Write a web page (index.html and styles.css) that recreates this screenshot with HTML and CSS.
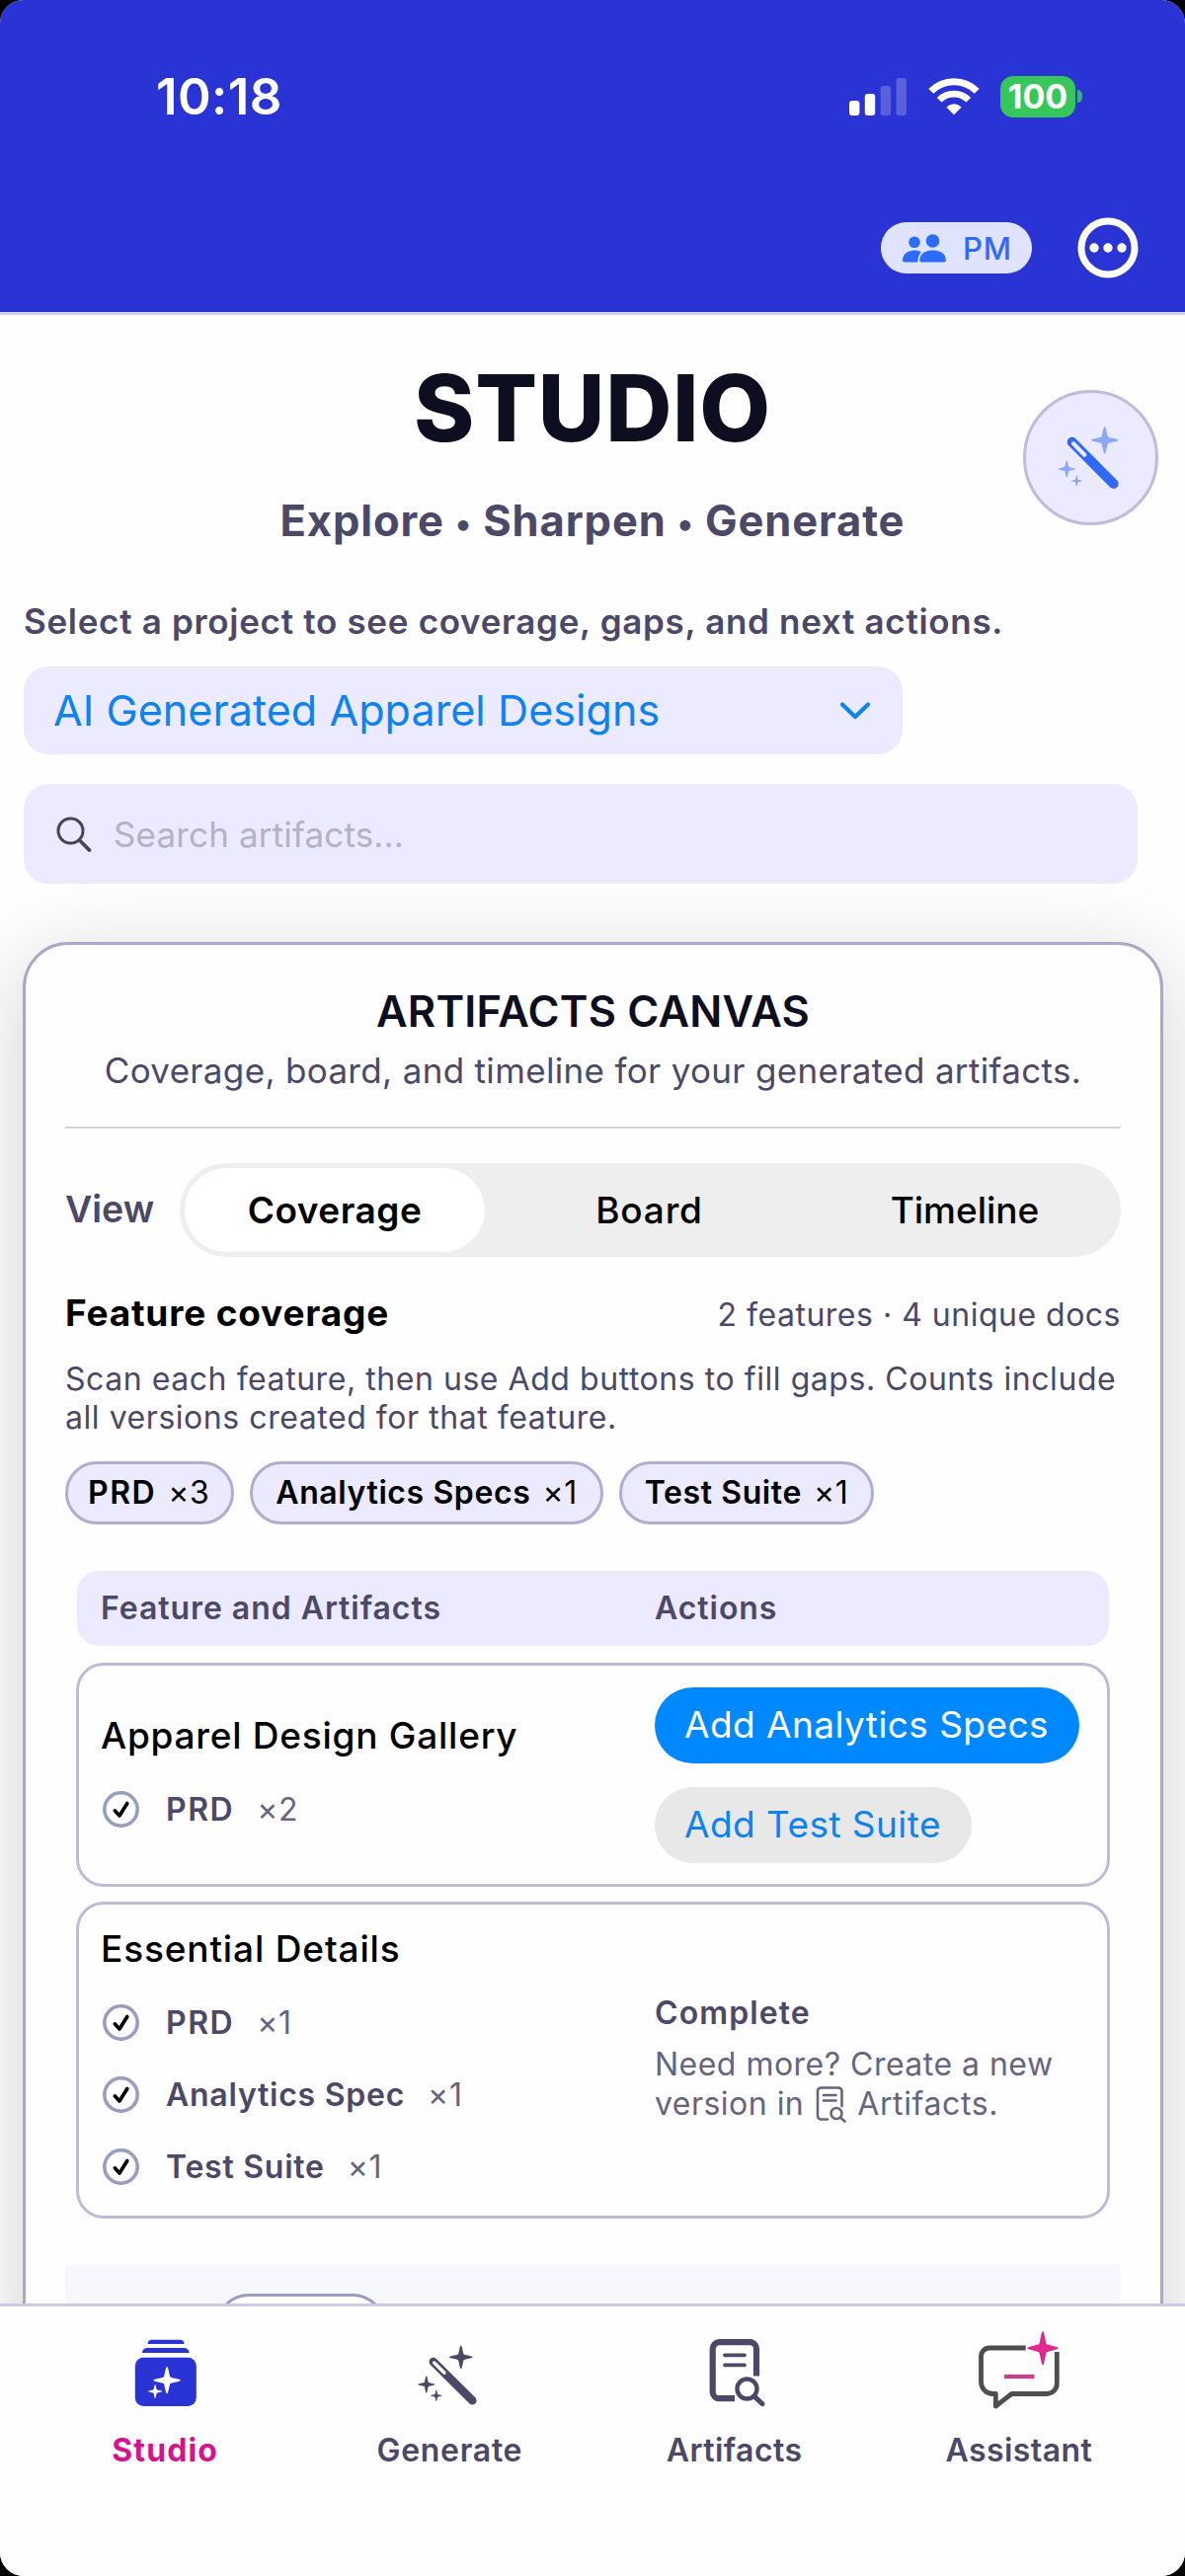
FILE: index.html
```html
<!DOCTYPE html>
<html lang="en">
<head>
<meta charset="utf-8">
<title>Studio</title>
<link rel="stylesheet" href="styles.css">
</head>
<body>
<svg width="0" height="0" class="defs">
  <defs>
    <path id="spark" d="M0-1C.1-1 .14-.5 .24-.24C.5-.14 1-.1 1 0C1 .1 .5.14 .24.24C.14.5 .1 1 0 1C-.1 1-.14.5-.24.24C-.5.14-1 .1-1 0C-1-.1-.5-.14-.24-.24C-.14-.5-.1-1 0-1Z"/>
    <symbol id="docsearch" viewBox="0 0 90 90">
      <g fill="none" stroke="currentColor" stroke-linecap="round">
        <path d="M46 71.2H30.500a6.800 6.800 0 0 1-6.800-6.800V21a6.800 6.800 0 0 1 6.800-6.800H61.200a6.800 6.800 0 0 1 6.800 6.800V48.500" stroke-width="6.200" stroke-linecap="butt"/>
        <path d="M36 27.300H56M36 37.300H56" stroke-width="3.700"/>
        <circle cx="58.500" cy="61.500" r="10" stroke-width="4.400"/>
        <path d="M66.500 69.700L74 76.700" stroke-width="5"/>
      </g>
    </symbol>
  </defs>
</svg>
<div class="app">
  <header class="header">
    <div class="status">
      <span class="time">10:18</span>
      <svg class="signal" width="58" height="38" viewBox="0 0 58 38" fill="#fff">
        <rect x="0" y="23" width="10.4" height="15" rx="3"/>
        <rect x="15.8" y="16" width="10.4" height="22" rx="3"/>
        <g opacity=".22"><rect x="31.7" y="8" width="10.4" height="30" rx="3"/><rect x="47.5" y="0" width="10.4" height="38" rx="3"/></g>
      </svg>
      <svg class="wifi" width="52" height="38" viewBox="0 0 52 38" fill="none" stroke="#fff">
        <path d="M2.8 13.4A32.8 32.8 0 0 1 49.2 13.4" stroke-width="7"/>
        <path d="M11.2 22.3A20.8 20.8 0 0 1 40.8 22.3" stroke-width="6.6"/>
        <path d="M26 37.2L18.3 29.4Q26 23.2 33.7 29.4Z" fill="#fff" stroke="none"/>
      </svg>
      <span class="battery">100</span><span class="nub"></span>
    </div>
    <div class="actions">
      <span class="role">
        <svg width="44" height="29" viewBox="0 0 44 29" fill="#2c6cf8">
          <circle cx="12" cy="8.3" r="5.8"/><path d="M0 26.700C0 20 6 16.500 12 16.500C14.500 16.500 17 17 18.800 18.200C16.300 21 15.300 24.500 15.300 28.500H2Q0 28.500 0 26.700Z"/>
          <circle cx="30.500" cy="7" r="6.800"/><path d="M17.300 26.700C17.300 19.500 24 16.500 30.600 16.500C37.200 16.500 43.900 19.500 43.900 26.700Q43.900 28.500 42 28.500H19.200Q17.300 28.500 17.300 26.700Z"/>
        </svg>
        <b>PM</b>
      </span>
      <svg class="more" width="62" height="62" viewBox="0 0 62 62"><circle cx="31" cy="31" r="27" fill="none" stroke="#fff" stroke-width="7"/><g fill="#fff"><circle cx="17" cy="31" r="4.700"/><circle cx="31" cy="31" r="4.700"/><circle cx="45" cy="31" r="4.700"/></g></svg>
    </div>
  </header>

  <main class="main">
    <section class="hero">
      <div class="hero-text">
        <h1>STUDIO</h1>
        <p>Explore <small>•</small> Sharpen <small>•</small> Generate</p>
      </div>
      <div class="magic">
        <svg width="137" height="137" viewBox="0 0 137 137">
          <path d="M49.700 52.800L91.700 95" stroke="#2e6af6" stroke-width="10" stroke-linecap="round"/>
          <path d="M51 54.300L62.300 65.700" stroke="#eceafe" stroke-width="4.200" stroke-linecap="round"/>
          <g fill="#8ba8f7"><use href="#spark" transform="translate(82.700 50.700) scale(13.700)"/><use href="#spark" transform="translate(44.300 80) scale(8.700)"/><use href="#spark" transform="translate(54.300 92) scale(5.700)"/></g>
        </svg>
      </div>
    </section>
    <p class="hint">Select a project to see coverage, gaps, and next actions.</p>
    <div class="select"><span>AI Generated Apparel Designs</span>
      <svg width="32" height="20" viewBox="0 0 32 20"><path d="M3 3.500L16 16L29 3.500" fill="none" stroke="#0d82f2" stroke-width="4.200" stroke-linecap="round" stroke-linejoin="round"/></svg>
    </div>
    <div class="search">
      <svg width="36" height="36" viewBox="0 0 36 36" fill="none" stroke="#45445f" stroke-linecap="round"><circle cx="14.500" cy="14.500" r="12.500" stroke-width="3"/><path d="M24 24.500L33.500 34" stroke-width="3.800"/></svg>
      <span>Search artifacts...</span>
    </div>

    <section class="canvas">
      <h2>ARTIFACTS CANVAS</h2>
      <p class="sub">Coverage, board, and timeline for your generated artifacts.</p>
      <hr>
      <div class="view">
        <span class="view-label">View</span>
        <div class="segments"><span class="on">Coverage</span><span class="mid">Board</span><span class="end">Timeline</span></div>
      </div>
      <div class="coverage"><h3>Feature coverage</h3><span>2 features · 4 unique docs</span></div>
      <p class="note">Scan each feature, then use Add buttons to fill gaps. Counts include<br>all versions created for that feature.</p>
      <div class="chips">
        <span class="chip"><b class="prd">PRD</b><i>×3</i></span>
        <span class="chip"><b>Analytics Specs</b><i>×1</i></span>
        <span class="chip"><b>Test Suite</b><i>×1</i></span>
      </div>
      <div class="thead"><span>Feature and Artifacts</span><span>Actions</span></div>
      <div class="row row-gallery">
        <div class="left">
          <h4>Apparel Design Gallery</h4>
          <div class="item"><svg class="check" viewBox="0 0 37 37"><circle cx="18.500" cy="18.500" r="16.700"/><path d="M12.300 19.800L17 25L24.800 12.500"/></svg><b class="prd">PRD</b><i>×2</i></div>
        </div>
        <div class="right">
          <span class="btn primary">Add Analytics Specs</span>
          <span class="btn">Add Test Suite</span>
        </div>
      </div>
      <div class="row row-details">
        <div class="left">
          <h4 class="ess">Essential Details</h4>
          <div class="item"><svg class="check" viewBox="0 0 37 37"><circle cx="18.500" cy="18.500" r="16.700"/><path d="M12.300 19.800L17 25L24.800 12.500"/></svg><b class="prd">PRD</b><i>×1</i></div>
          <div class="item"><svg class="check" viewBox="0 0 37 37"><circle cx="18.500" cy="18.500" r="16.700"/><path d="M12.300 19.800L17 25L24.800 12.500"/></svg><b>Analytics Spec</b><i>×1</i></div>
          <div class="item"><svg class="check" viewBox="0 0 37 37"><circle cx="18.500" cy="18.500" r="16.700"/><path d="M12.300 19.800L17 25L24.800 12.500"/></svg><b>Test Suite</b><i>×1</i></div>
        </div>
        <div class="right">
          <h5>Complete</h5>
          <p class="more-text">Need more? Create a new</p>
          <p class="more-text inline"><span>version in</span>
            <svg width="32" height="37" viewBox="0 0 32 37" fill="none" stroke="currentColor" stroke-width="2.600" stroke-linecap="round"><path d="M12 33.500H5.500a3.500 3.500 0 0 1-3.500-3.500V5a3.500 3.500 0 0 1 3.500-3.500H23a3.500 3.500 0 0 1 3.500 3.500V20"/><path d="M8 9H20.500M8 14.500H20.500"/><circle cx="21" cy="27.500" r="5.500"/><path d="M25.200 31.700L29.500 35.500"/></svg>
            <span class="art">Artifacts.</span></p>
        </div>
      </div>
      <div class="band"><div class="stub"></div></div>
    </section>
  </main>

  <nav class="tabs">
    <div class="tab active">
      <svg width="90" height="90" viewBox="0 0 90 90"><g fill="#2a33d3"><path d="M28.500 16Q28.500 11.700 33 11.700H61Q65.500 11.700 65.500 16Z"/><path d="M22.800 25Q23.500 20 28.500 20H65Q70 20 70.800 25Z"/><rect x="15.800" y="29.700" width="62" height="49.300" rx="8.500"/></g><g fill="#fff"><use href="#spark" transform="translate(48.100 52.700) scale(13.700)"/><use href="#spark" transform="translate(36.100 64) scale(7)"/></g></svg>
      <span>Studio</span>
    </div>
    <div class="tab gen">
      <svg width="90" height="90" viewBox="0 0 90 90"><path d="M29.800 34L69.300 73.300" stroke="#4b4868" stroke-width="8.600" stroke-linecap="round"/><path d="M30.700 35L41 45.300" stroke="#fff" stroke-width="3.400" stroke-linecap="round"/><g fill="#4b4868"><use href="#spark" transform="translate(57.800 29.300) scale(11.900)"/><use href="#spark" transform="translate(22.800 57) scale(8.700)"/><use href="#spark" transform="translate(32.800 68.300) scale(5.800)"/></g></svg>
      <span>Generate</span>
    </div>
    <div class="tab">
      <svg width="90" height="90"><use href="#docsearch"/></svg>
      <span>Artifacts</span>
    </div>
    <div class="tab">
      <svg width="90" height="90" viewBox="0 0 90 90"><path d="M52.700 20H16a8.500 8.500 0 0 0-8.500 8.500V54A12 12 0 0 0 19.500 66.500H22.300V79L38.500 66.500H74A10.300 10.300 0 0 0 84.300 56V24" fill="none" stroke="#4d4f4f" stroke-width="4.800" stroke-linejoin="round"/><path d="M31 49H61.500" stroke="#c93f8d" stroke-width="4.200"/><use href="#spark" fill="#e0288f" transform="translate(70 20.300) scale(15.700 17)"/></svg>
      <span>Assistant</span>
    </div>
  </nav>
</div>
</body>
</html>
```
FILE: styles.css
```css
* { box-sizing: border-box; margin: 0; padding: 0; }
body { background: #000; font-family: Inter, "Liberation Sans", sans-serif; color: #4b4868; white-space: nowrap; }
svg { flex: none; display: block; }
.defs { display: none; }
i { font-style: normal; }
.app { width: 1200px; height: 2609px; border-radius: 24px; overflow: hidden; background: #fefefe; display: flex; flex-direction: column; }

/* Header */
.header { flex: none; height: 319px; background: #2a33d3; border-bottom: 3px solid #cfcdea; }
.status { height: 195px; display: flex; align-items: center; padding-left: 158px; color: #fff; }
.time { width: 702px; font-size: 51px; font-weight: 600; letter-spacing: .4px; }
.wifi { margin: 0 21px 0 22px; }
.battery { width: 76px; height: 42px; border-radius: 13px; background: #35c759; font-size: 34px; font-weight: 700; line-height: 42px; text-align: center; }
.nub { width: 5px; height: 13px; margin-left: 2px; border-radius: 0 6px 6px 0; background: #35b869; }
.actions { height: 112px; display: flex; align-items: center; justify-content: flex-end; gap: 46px; padding-right: 47px; }
.role { width: 153px; height: 52px; border-radius: 26px; background: #e0e3fd; display: flex; align-items: center; gap: 17px; padding-left: 22px; color: #2f6cf3; }
.role b { font-size: 31px; font-weight: 500; letter-spacing: .8px; }

/* Page heading */
.main { flex: 1; min-height: 0; overflow: hidden; }
.hero { height: 239px; display: grid; grid-template-columns: 164px 1fr 137px; padding-right: 27px; }
.hero-text { grid-column: 2; padding-top: 44px; text-align: center; }
h1 { font-size: 93px; font-weight: 800; line-height: 100px; letter-spacing: .7px; color: #0d0e20; }
.hero-text p { margin-top: 34px; font-size: 43.500px; font-weight: 650; line-height: 60px; letter-spacing: .88px; }
.hero-text small { font-size: 34px; vertical-align: 1px; line-height: 1; }
.magic { width: 137px; height: 137px; margin-top: 76px; border: 3px solid #bfbbdc; border-radius: 50%; background: #eceafe; }
.magic svg { margin: -3px; }
.hint { margin: 49px 0 0 24px; font-size: 35px; font-weight: 600; line-height: 45px; letter-spacing: .69px; }
.select { width: 890px; height: 89px; margin: 23px 0 0 24px; padding: 0 32px 0 30px; border-radius: 25px; background: #eceafe; display: flex; align-items: center; justify-content: space-between; font-size: 43px; letter-spacing: .08px; color: #0d82f2; }
.select span { padding-bottom: 1px; }
.search { width: 1128px; height: 101px; margin: 30px 0 0 24px; padding-left: 33px; border-radius: 25px; background: #eceafe; display: flex; align-items: center; gap: 22px; font-size: 35px; letter-spacing: .15px; color: #b4b2c4; }

/* Artifacts canvas */
.canvas { width: 1155px; height: 1500px; margin: 59px 0 0 23px; padding: 42px 40px 0; border: 3px solid #a8a8cb; border-radius: 46px; background: #fefefe; box-shadow: 0 20px 90px rgba(0, 0, 0, .18); }
h2 { font-size: 43.500px; font-weight: 600; line-height: 50px; letter-spacing: .2px; text-align: center; color: #0d0e20; }
.sub { margin-top: 15px; font-size: 35px; line-height: 40px; letter-spacing: .33px; text-align: center; }
hr { height: 2px; margin-top: 37px; border: 0; background: #d3d3d8; }
.view { margin-top: 35px; display: flex; align-items: center; justify-content: space-between; }
.view-label { font-size: 37.500px; font-weight: 600; padding-bottom: 3px; }
.segments { width: 953px; height: 95px; padding: 5px; border-radius: 48px; background: #eee; display: flex; align-items: center; font-size: 37px; font-weight: 500; color: #000; text-align: center; }
.on { width: 304px; line-height: 85px; border-radius: 43px; background: #fff; font-weight: 600; letter-spacing: .5px; }
.mid { width: 333px; letter-spacing: .8px; }
.end { flex: 1; }
.coverage { margin-top: 37px; display: flex; align-items: baseline; justify-content: space-between; line-height: 40px; font-size: 32px; letter-spacing: .5px; }
h3 { font-size: 37px; font-weight: 650; letter-spacing: .82px; color: #000; }
.note { margin-top: 26px; font-size: 32px; line-height: 38.500px; letter-spacing: .55px; }
.chips { margin-top: 25px; display: flex; gap: 16px; color: #000; }
.chip { height: 64px; padding: 0 22px 0 20px; border: 3px solid #b0aed0; border-radius: 32px; background: #eceafe; display: flex; align-items: center; gap: 12px; font-size: 32px; line-height: 57px; align-items: flex-start; letter-spacing: .6px; }
.chip b, .item b { font-weight: 600; }
.chip:nth-child(2), .chip:nth-child(3) { padding: 0 23px; }
.prd { letter-spacing: 1.500px; }
.thead { height: 76px; margin: 47px 12px 0; padding: 0 0 1px 24px; border-radius: 22px; background: #eceafe; display: grid; grid-template-columns: 561px 1fr; align-items: center; font-size: 32px; font-weight: 600; letter-spacing: .95px; }
.row { margin: 17px 11px 0; padding-left: 22px; border: 3px solid #bdbbd8; border-radius: 28px; display: grid; grid-template-columns: 561px 1fr; }
.row-gallery { height: 227px; }
.row-details { height: 321px; margin-top: 15px; }
h4 { font-size: 37px; font-weight: 500; line-height: 46px; letter-spacing: .75px; color: #000; }
.ess { letter-spacing: .85px; }
.row-gallery .left { padding-top: 48px; }
.row-details .left { padding-top: 22px; }
.left h4 { margin-bottom: 15px; }
.item { height: 73px; display: flex; align-items: center; font-size: 32px; letter-spacing: .75px; }
.check { width: 37px; height: 37px; margin: 0 27px 0 2px; fill: none; }
.check circle { stroke: #989dc2; stroke-width: 3.600; }
.check path { stroke: #000; stroke-width: 3.600; stroke-linecap: round; stroke-linejoin: round; }
.item i { margin-left: 23px; color: #66647f; }
.row-gallery .right { padding-top: 22px; display: flex; flex-direction: column; align-items: flex-start; gap: 24px; }
.btn { height: 77px; padding: 0 31px 0 30px; border-radius: 39px; background: #e8e8e9; color: #0d82f2; font-size: 37px; line-height: 76px; letter-spacing: .44px; }
.primary { background: #0088ff; color: #fff; }
.row-details .right { padding-top: 90px; }
h5 { font-size: 32px; font-weight: 600; line-height: 40px; letter-spacing: 1.100px; margin-bottom: 12px; }
.more-text { font-size: 32px; line-height: 40px; letter-spacing: .48px; color: #66647f; }
.inline { display: flex; align-items: center; }
.inline svg { margin: 0 10px 0 12px; }
.art { letter-spacing: .6px; }
.band { height: 300px; margin-top: 47px; padding: 29px 0 0 152px; background: #f7f8fe; }
.stub { width: 173px; height: 74px; border: 3px solid #999dc0; border-radius: 34px; background: #fefefe; }

/* Tab bar */
.tabs { flex: none; height: 276px; border-top: 3px solid #cdcbe2; padding: 22px 24px 0 23px; background: #fefefe; display: grid; grid-template-columns: repeat(4, 1fr); }
.tab { display: flex; flex-direction: column; align-items: center; gap: 14px; font-size: 32px; font-weight: 600; line-height: 40px; letter-spacing: .45px; }
.tab svg { margin-right: 2px; }
.active { font-weight: 700; letter-spacing: 1.100px; color: #d6128c; }
.gen { letter-spacing: .7px; }
```
